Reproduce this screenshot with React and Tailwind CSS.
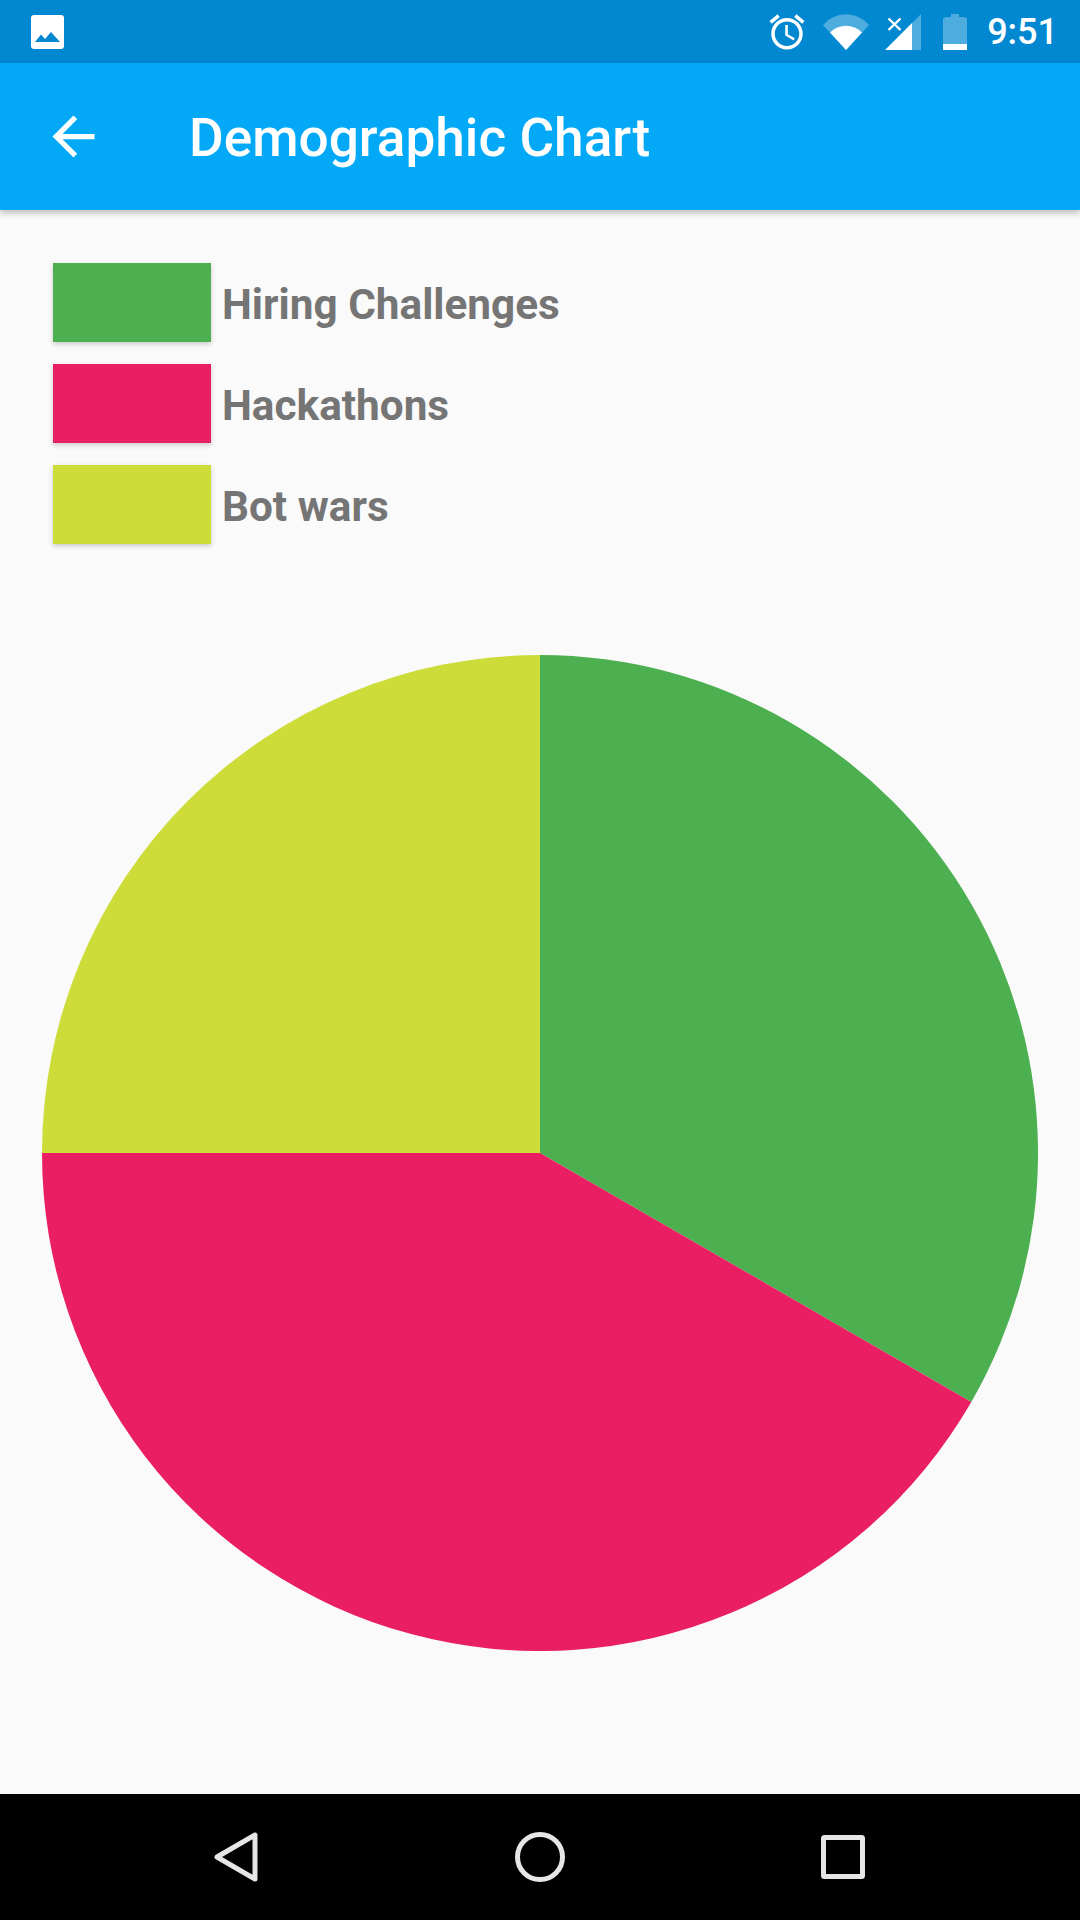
const legend = [
  { label: "Hiring Challenges", color: "bg-[#4CAF50]" },
  { label: "Hackathons", color: "bg-[#E91E63]" },
  { label: "Bot wars", color: "bg-[#CDDC39]" },
]

function StatusBar() {
  return (
    <div className="h-[63px] shrink-0 bg-[#0288D1] flex items-center pl-[31px] pr-[22px]">
      <svg width="33" height="34" viewBox="0 0 33 34">
        <rect width="33" height="34" rx="3" fill="#fff" />
        <path d="M4 27L10 19.5L14 24L20 17L29 27Z" fill="#0288D1" />
      </svg>
      <div className="ml-auto flex items-center">
        <svg width="42" height="42" viewBox="0 0 24 24" fill="#fff">
          <path d="M22 5.72l-4.6-3.86-1.29 1.53 4.6 3.86L22 5.72zM7.88 3.39L6.6 1.86 2 5.71l1.29 1.53 4.59-3.85zM12.5 8H11v6l4.75 2.85.75-1.23-4-2.37V8zM12 4c-4.97 0-9 4.03-9 9s4.03 9 9 9 9-4.03 9-9-4.03-9-9-9zm0 16c-3.87 0-7-3.13-7-7s3.13-7 7-7 7 3.13 7 7-3.13 7-7 7z" />
        </svg>
        <svg className="ml-[15px]" width="46" height="36" viewBox="0 0 46 36">
          <path d="M0 11C13 -3.5 33 -3.5 46 11L23 36Z" fill="#fff" fillOpacity="0.3" />
          <path d="M7 18.5C16 9.5 30 9.5 39 18.5L23 36Z" fill="#fff" />
        </svg>
        <svg className="ml-[16px]" width="36" height="36" viewBox="0 0 36 36">
          <path d="M36 0V36H27V9Z" fill="#fff" fillOpacity="0.3" />
          <path d="M27 9V36H0Z" fill="#fff" />
          <path d="M3.5 4.5L15.5 16M15.5 4.5L3.5 16" stroke="#fff" strokeWidth="2.4" fill="none" />
        </svg>
        <svg className="ml-[22px]" width="24" height="36" viewBox="0 0 24 36">
          <path d="M5 3H8V0H16V3H19Q24 3 24 5V36H0V5Q0 3 5 3Z" fill="#fff" fillOpacity="0.3" />
          <rect y="30" width="24" height="6" fill="#fff" />
        </svg>
        <span className="ml-[20px] text-[36px] leading-none font-medium text-white">9:51</span>
      </div>
    </div>
  )
}

function AppBar() {
  return (
    <div className="h-[147px] shrink-0 bg-[#03A9F6] shadow-[0_3px_6px_rgba(0,0,0,0.25)] relative flex items-center pl-[42px]">
      <svg width="63" height="63" viewBox="0 0 24 24" fill="#fff">
        <path d="M20 11H7.83l5.59-5.59L12 4l-8 8 8 8 1.41-1.41L7.83 13H20v-2z" />
      </svg>
      <h1 className="ml-[84px] pt-[5px] text-[53.2px] font-medium text-white">Demographic Chart</h1>
    </div>
  )
}

function PieChart() {
  return (
    <svg width="996" height="996" viewBox="-498 -498 996 996">
      <path d="M0 0V-498A498 498 0 0 1 431.3 249Z" fill="#4CAF50" />
      <path d="M0 0L431.3 249A498 498 0 0 1 -498 0Z" fill="#E91E63" />
      <path d="M0 0H-498A498 498 0 0 1 0 -498Z" fill="#CDDC39" />
    </svg>
  )
}

function NavBar() {
  return (
    <div className="h-[126px] shrink-0 bg-black flex items-center justify-between pl-[214px] pr-[215px]">
      <svg width="45" height="50" viewBox="0 0 45 50" fill="none" stroke="#E6E6E6" strokeWidth="5" strokeLinejoin="round">
        <path d="M41 3V47L3 25Z" />
      </svg>
      <svg className="mr-[1px]" width="50" height="50" viewBox="0 0 50 50" fill="none" stroke="#E6E6E6" strokeWidth="5">
        <circle cx="25" cy="25" r="22.5" />
      </svg>
      <svg width="44" height="44" viewBox="0 0 44 44" fill="none" stroke="#E6E6E6" strokeWidth="5" strokeLinejoin="round">
        <rect x="2.5" y="2.5" width="39" height="39" rx="1" />
      </svg>
    </div>
  )
}

export default function App() {
  return (
    <div className="w-[1080px] h-[1920px] flex flex-col bg-[#FAFAFA] overflow-hidden font-['Roboto',sans-serif]">
      <StatusBar />
      <AppBar />
      <div className="flex-1 flex flex-col">
        <div className="pt-[53px] pl-[53px] flex flex-col gap-[22px]">
          {legend.map((item) => (
            <div key={item.label} className="flex items-center gap-[11px]">
              <div className={`w-[158px] h-[79px] shadow-[0_2px_5px_rgba(0,0,0,0.2)] ${item.color}`}></div>
              <span className="pt-[5px] text-[42.3px] font-bold text-[#757575]">{item.label}</span>
            </div>
          ))}
        </div>
        <div className="mt-[111px] flex justify-center">
          <PieChart />
        </div>
      </div>
      <NavBar />
    </div>
  )
}
